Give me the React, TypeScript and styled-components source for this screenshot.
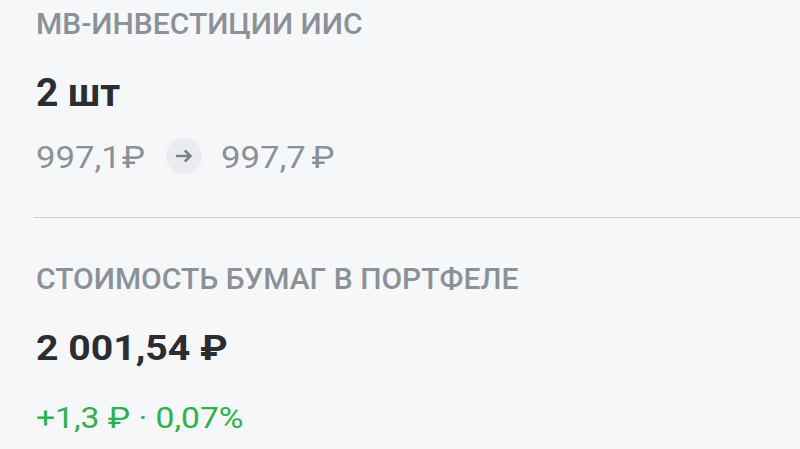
import React from "react";
import styled, { createGlobalStyle } from "styled-components";

const Global = createGlobalStyle`
  html, body { margin: 0; padding: 0; background: #f6f7f9; }
  body { font-family: Roboto, "Noto Sans", Arial, sans-serif; }
`;

const Page = styled.div`
  width: 800px;
  height: 449px;
  overflow: hidden;
  background: #f6f7f9;
  display: flex;
  flex-direction: column;
  padding-top: 6px;
  box-sizing: border-box;
`;

const Section = styled.section`
  display: flex;
  flex-direction: column;
  align-items: flex-start;
  padding-left: 36px;
`;

const Caption = styled.div<{ $mt?: number }>`
  font-size: 30px;
  line-height: 36px;
  font-weight: 500;
  color: #8c9199;
  text-transform: uppercase;
  margin-top: ${(p) => p.$mt ?? 0}px;
  white-space: nowrap;
`;

const Count = styled.div`
  font-size: 39px;
  line-height: 46px;
  font-weight: 700;
  color: #2b2d31;
  margin-top: 28px;
  white-space: nowrap;
`;

/* numeric figures in the app are drawn a little wider than plain Roboto */
const Figure = styled.span<{ $size: number; $lh: number; $weight?: number; $color: string }>`
  display: inline-block;
  font-size: ${(p) => p.$size}px;
  line-height: ${(p) => p.$lh}px;
  font-weight: ${(p) => p.$weight ?? 400};
  color: ${(p) => p.$color};
  white-space: nowrap;
  transform: scaleX(1.12);
  transform-origin: left center;
`;

const Currency = styled.span<{ $gap?: number }>`
  margin-left: ${(p) => p.$gap ?? 0}px;
`;

const PriceRow = styled.div`
  display: flex;
  align-items: center;
  margin-top: 22px;
  height: 40px;
`;

const ArrowBadge = styled.span`
  width: 36px;
  height: 36px;
  border-radius: 50%;
  background: #eaebee;
  display: flex;
  align-items: center;
  justify-content: center;
  margin: -4px 19px 0 33px;
  flex: none;
`;

const Divider = styled.hr`
  border: none;
  height: 1px;
  background: #cacdd1;
  margin: 39px 0 0 34px;
`;

const ValueLine = styled.div<{ $mt: number }>`
  margin-top: ${(p) => p.$mt}px;
  display: flex;
`;

const Arrow = () => (
  <svg width="18" height="14" viewBox="0 0 18 14" fill="none">
    <path
      d="M2 7H15.5M10.5 2.2L15.5 7L10.5 11.8"
      stroke="#7b8088"
      strokeWidth="2.6"
      strokeLinecap="round"
      strokeLinejoin="round"
    />
  </svg>
);

const GRAY = "#8c9199";
const DARK = "#2b2d31";
const GREEN = "#2db14c";

export default function App() {
  return (
    <>
      <Global />
      <Page>
        <Section>
          <Caption>МВ-Инвестиции ИИС</Caption>
          <Count>2 шт</Count>
          <PriceRow>
            <Figure $size={31} $lh={40} $color={GRAY}>
              997,1<Currency $gap={1}>₽</Currency>
            </Figure>
            <ArrowBadge>
              <Arrow />
            </ArrowBadge>
            <Figure $size={31} $lh={40} $color={GRAY}>
              997,7<Currency $gap={5}>₽</Currency>
            </Figure>
          </PriceRow>
        </Section>
        <Divider />
        <Section>
          <Caption $mt={43}>Стоимость бумаг в портфеле</Caption>
          <ValueLine $mt={32}>
            <Figure $size={35} $lh={40} $weight={700} $color={DARK}>
              2 001,54 ₽
            </Figure>
          </ValueLine>
          <ValueLine $mt={31}>
            <Figure $size={30} $lh={36} $color={GREEN}>
              +1,3 ₽ · 0,07%
            </Figure>
          </ValueLine>
        </Section>
      </Page>
    </>
  );
}
